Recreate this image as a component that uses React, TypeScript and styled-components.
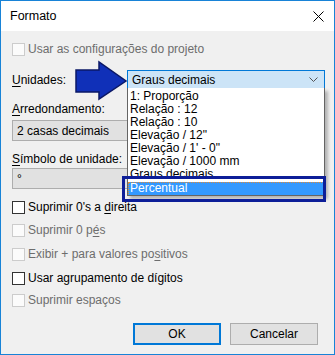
import React from "react";
import styled, { createGlobalStyle } from "styled-components";

const Global = createGlobalStyle`
  html, body { margin: 0; padding: 0; background: #ffffff; }
  body { font-family: "Liberation Sans", Arial, sans-serif; font-size: 12px; }
`;

const Dialog = styled.div`
  position: relative;
  width: 335px;
  height: 355px;
  box-sizing: border-box;
  border: 1px solid #1883d7;
  background: #f0f0f0;
  display: flex;
  flex-direction: column;
  color: #000;
`;

const TitleBar = styled.div`
  height: 30px;
  background: #ffffff;
  display: flex;
  align-items: center;
  justify-content: space-between;
  padding: 0 10px 0 9px;
  font-size: 12.5px;
`;

const Body = styled.div`
  display: flex;
  flex-direction: column;
  padding: 0 11px;
`;

const CheckRow = styled.label<{ $mt: number; $disabled?: boolean }>`
  display: flex;
  align-items: center;
  gap: 3px;
  height: 14px;
  margin-top: ${(p) => p.$mt}px;
  color: ${(p) => (p.$disabled ? "#6d6d6d" : "#000")};
  white-space: nowrap;
`;

const Box = styled.span<{ $disabled?: boolean }>`
  flex: none;
  width: 11px;
  height: 11px;
  border: 1px solid ${(p) => (p.$disabled ? "#cccccc" : "#333333")};
  background: ${(p) => (p.$disabled ? "#fbfbfb" : "#ffffff")};
`;

const ComboRow = styled.div`
  display: flex;
  align-items: center;
  margin-top: 14px;
  height: 20px;
`;

const Label = styled.div<{ $mt?: number }>`
  margin-top: ${(p) => p.$mt ?? 0}px;
  height: 16px;
  line-height: 16px;
  white-space: nowrap;
`;

const ActiveCombo = styled.div`
  margin-left: auto;
  margin-right: -2px;
  width: 198px;
  height: 20px;
  box-sizing: border-box;
  border: 1px solid #0078d7;
  background: #cce4f7;
  display: flex;
  align-items: center;
  justify-content: space-between;
  padding: 0 6px 0 4px;
`;

const GrayBox = styled.div<{ $mt: number }>`
  margin-top: ${(p) => p.$mt}px;
  width: 313px;
  height: 21px;
  box-sizing: border-box;
  border: 1px solid #adadad;
  background: #e1e1e1;
  display: flex;
  align-items: center;
  padding: 0 4px;
`;

const ButtonRow = styled.div`
  display: flex;
  justify-content: flex-end;
  gap: 9px;
  margin-top: 16px;
  padding-right: 5px;
`;

const Button = styled.div<{ $default?: boolean }>`
  width: 88px;
  height: 22px;
  box-sizing: border-box;
  border: ${(p) => (p.$default ? "2px solid #0078d7" : "1px solid #adadad")};
  background: #e1e1e1;
  display: flex;
  align-items: center;
  justify-content: center;
`;

const List = styled.div`
  position: absolute;
  left: 126px;
  top: 87px;
  width: 198px;
  height: 108px;
  box-sizing: border-box;
  border: 1px solid #646464;
  border-top: none;
  background: #ffffff;
  box-shadow: 3px 3px 3px rgba(0, 0, 0, 0.25);
  padding-top: 2px;
  overflow: hidden;
`;

const Item = styled.div<{ $selected?: boolean }>`
  line-height: 13px;
  padding-left: 2px;
  white-space: nowrap;
  color: ${(p) => (p.$selected ? "#ffffff" : "#000")};
  background: ${(p) => (p.$selected ? "#3399ff" : "transparent")};
  outline: ${(p) => (p.$selected ? "1px dotted #d98a3c" : "none")};
  outline-offset: -1px;
  margin-top: ${(p) => (p.$selected ? "1px" : "0")};
  height: ${(p) => (p.$selected ? "14px" : "13px")};
`;

const Callout = styled.div`
  position: absolute;
  left: 121px;
  top: 175px;
  width: 204px;
  height: 26px;
  box-sizing: border-box;
  border: 3px solid #0d1e98;
`;

const Arrow = styled.svg`
  position: absolute;
  left: 72px;
  top: 58px;
`;

const U = styled.span`
  text-decoration: underline;
  text-underline-offset: 2px;
`;

const options = [
  "1: Proporção",
  "Relação : 12",
  "Relação : 10",
  "Elevação / 12\"",
  "Elevação / 1' - 0\"",
  "Elevação / 1000 mm",
  "Graus decimais",
];

export default function App() {
  return (
    <>
      <Global />
      <Dialog>
        <TitleBar>
          <span>Formato</span>
          <svg width="11" height="11" viewBox="0 0 11 11">
            <path d="M0.5 0.5 L10.5 10.5 M10.5 0.5 L0.5 10.5" stroke="#000" strokeWidth="1" />
          </svg>
        </TitleBar>
        <Body>
          <CheckRow $mt={11} $disabled>
            <Box $disabled />
            <span>Usar as configurações do projeto</span>
          </CheckRow>
          <ComboRow>
            <Label>
              <U>U</U>nidades:
            </Label>
            <ActiveCombo>
              <span>Graus decimais</span>
              <svg width="9" height="6" viewBox="0 0 9 6">
                <path d="M0.5 0.5 L4.5 4.5 L8.5 0.5" stroke="#555" fill="none" strokeWidth="1" />
              </svg>
            </ActiveCombo>
          </ComboRow>
          <Label $mt={11}>
            <U>A</U>rredondamento:
          </Label>
          <GrayBox $mt={3}>2 casas decimais</GrayBox>
          <Label $mt={10}>
            <U>S</U>ímbolo de unidade:
          </Label>
          <GrayBox $mt={1}>°</GrayBox>
          <CheckRow $mt={11}>
            <Box />
            <span>
              Suprimir 0's a <U>d</U>ireita
            </span>
          </CheckRow>
          <CheckRow $mt={9} $disabled>
            <Box $disabled />
            <span>
              Suprimir 0 p<U>é</U>s
            </span>
          </CheckRow>
          <CheckRow $mt={10} $disabled>
            <Box $disabled />
            <span>
              Exibir + para valores po<U>s</U>itivos
            </span>
          </CheckRow>
          <CheckRow $mt={10}>
            <Box />
            <span>Usar agrupamento de dígitos</span>
          </CheckRow>
          <CheckRow $mt={8} $disabled>
            <Box $disabled />
            <span>Suprimir espaços</span>
          </CheckRow>
          <ButtonRow>
            <Button $default>OK</Button>
            <Button>Cancelar</Button>
          </ButtonRow>
        </Body>
        <Arrow width="56" height="42" viewBox="0 0 56 42">
          <polygon
            points="3,11 26,11 26,3 53,22 26,40 26,33 3,33"
            fill="#1030b8"
            stroke="#0a1766"
            strokeWidth="1.5"
          />
        </Arrow>
        <List>
          {options.map((o) => (
            <Item key={o}>{o}</Item>
          ))}
          <Item $selected>Percentual</Item>
        </List>
        <Callout />
      </Dialog>
    </>
  );
}
